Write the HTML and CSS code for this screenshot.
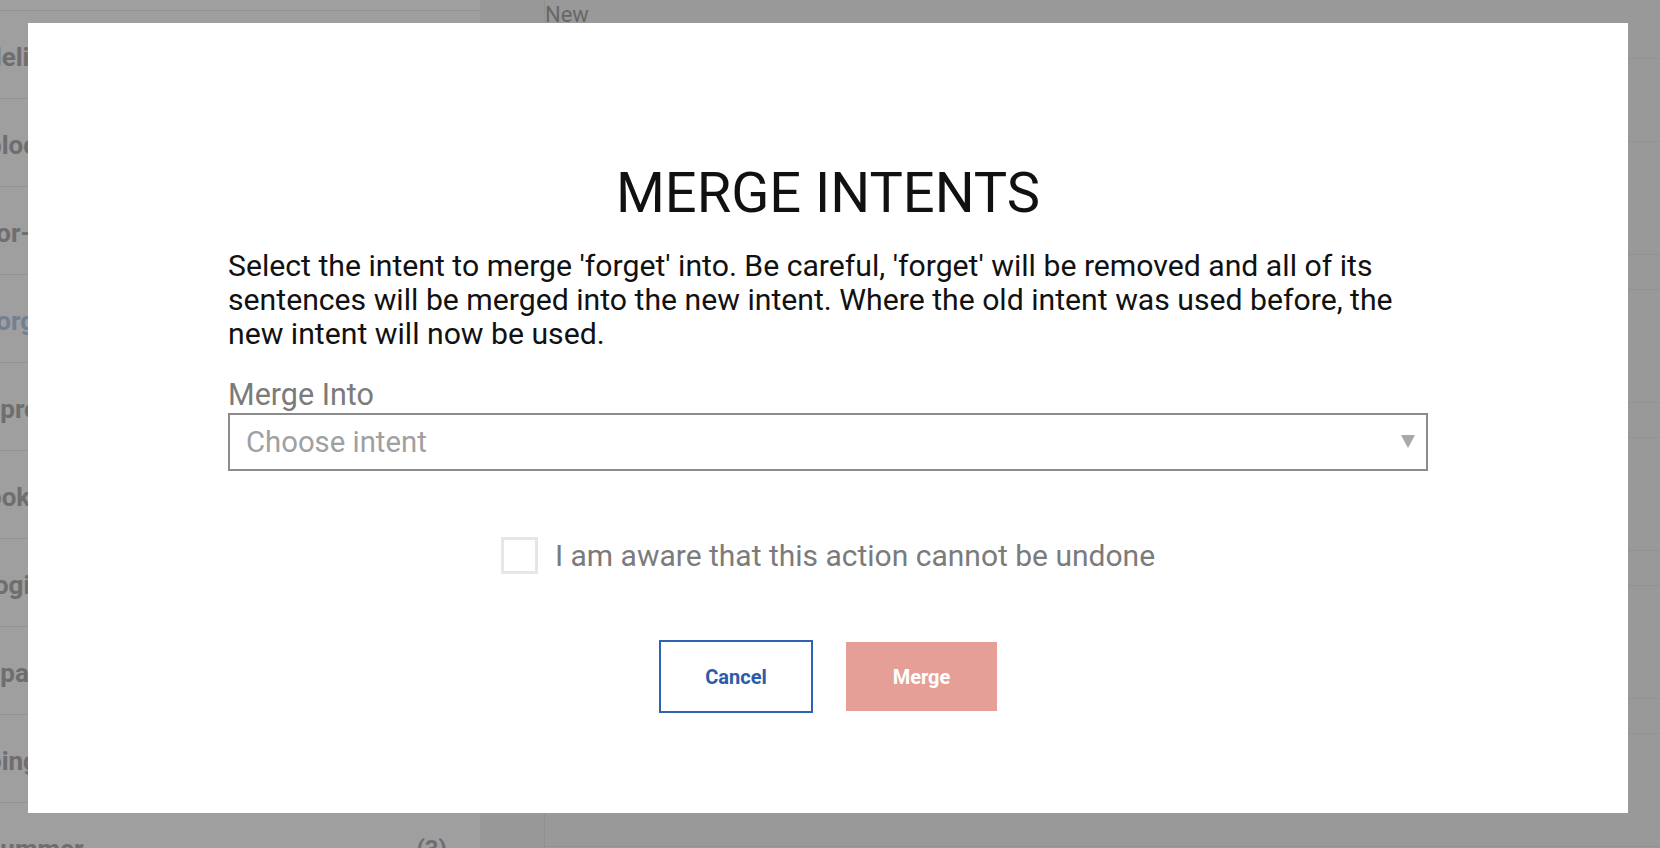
FILE: index.html
```html
<!DOCTYPE html>
<html lang="en">
<head>
    <meta charset="UTF-8" />
    <meta name="viewport" content="width=device-width, initial-scale=1.0"/>
    <title>Intents - Merge</title>
    <link rel="stylesheet" href="styles.css">
</head>
<body>
    <div class="app">
        <aside class="sidebar">
            <ul class="intent-list">
                <li class="intent-item"><span class="intent-name">greeting</span><span class="intent-count">(12)</span></li>
                <li class="intent-item"><span class="intent-name">delivery</span><span class="intent-count">(8)</span></li>
                <li class="intent-item"><span class="intent-name">block</span><span class="intent-count">(4)</span></li>
                <li class="intent-item"><span class="intent-name">for-sale</span><span class="intent-count">(6)</span></li>
                <li class="intent-item active"><span class="intent-name">forget</span><span class="intent-count">(5)</span></li>
                <li class="intent-item"><span class="intent-name">sprout</span><span class="intent-count">(2)</span></li>
                <li class="intent-item"><span class="intent-name">poke</span><span class="intent-count">(7)</span></li>
                <li class="intent-item"><span class="intent-name">login</span><span class="intent-count">(9)</span></li>
                <li class="intent-item"><span class="intent-name">spare-time</span><span class="intent-count">(3)</span></li>
                <li class="intent-item"><span class="intent-name">ping</span><span class="intent-count">(1)</span></li>
                <li class="intent-item"><span class="intent-name">summer</span><span class="intent-count">(3)</span></li>
            </ul>
        </aside>

        <main class="content">
            <div class="sentences">
                <div class="toolbar"><span class="tab">New</span></div>
                <div class="list-head"></div>
                <div class="sentence"></div>
                <div class="sentence-meta"></div>
                <div class="sentence"></div>
                <div class="sentence-meta"></div>
                <div class="sentence"></div>
                <div class="sentence-meta"></div>
                <div class="sentence"></div>
                <div class="sentence-meta"></div>
                <div class="sentence"></div>
            </div>
        </main>
    </div>

    <div class="overlay">
        <div class="modal">
            <h1 class="modal-title">MERGE INTENTS</h1>
            <div class="modal-body">
                <p class="modal-text">Select the intent to merge 'forget' into. Be careful, 'forget' will be removed and all of its sentences will be merged into the new intent. Where the old intent was used before, the new intent will now be used.</p>

                <label class="field-label" for="merge-into">Merge Into</label>
                <div class="select-wrap">
                    <select class="select" id="merge-into">
                        <option value="">Choose intent</option>
                        <option value="greeting">greeting</option>
                        <option value="delivery">delivery</option>
                        <option value="summer">summer</option>
                    </select>
                </div>

                <label class="confirm">
                    <input type="checkbox" class="confirm-box">
                    <span class="confirm-text">I am aware that this action cannot be undone</span>
                </label>

                <div class="modal-actions">
                    <button class="btn btn-cancel">Cancel</button>
                    <button class="btn btn-merge" disabled>Merge</button>
                </div>
            </div>
        </div>
    </div>
</body>
</html>
```

FILE: styles.css
```css
* {
    margin: 0;
    padding: 0;
    box-sizing: border-box;
}

body {
    font-family: Roboto, "Liberation Sans", sans-serif;
    color: #111;
    background: #f5f5f5;
    height: 100vh;
    overflow: hidden;
}

.app {
    display: flex;
    height: 100vh;
}

/* sidebar with intents (scrolled) */
.sidebar {
    width: 480px;
    flex-shrink: 0;
    background: #fff;
    overflow: hidden;
}

.intent-list {
    list-style: none;
    margin-top: -77px;
    margin-left: -13px;
}

.intent-item {
    height: 88px;
    display: flex;
    align-items: center;
    justify-content: space-between;
    padding: 4px 33px 0 0;
    border-bottom: 1px solid #ececec;
}

.intent-name {
    font-size: 26px;
    font-weight: bold;
    color: #b0b0b0;
}

.intent-item.active .intent-name {
    color: #b8cdee;
}

.intent-count {
    font-size: 24px;
    font-weight: bold;
    color: #b0b0b0;
}

/* main content */
.content {
    flex: 1;
    background: #f4f4f4;
    padding-left: 64px;
}

.sentences {
    height: 100%;
    background: #f6f6f6;
    border-left: 1px solid #e8e8e8;
}

.toolbar {
    height: 59px;
    border-bottom: 1px solid #ebebeb;
}

.tab {
    display: inline-block;
    font-size: 22px;
    line-height: 30px;
    color: #a6a6a6;
}

.list-head {
    height: 83px;
    border-bottom: 1px solid #ebebeb;
}

.sentence {
    height: 113px;
    border-bottom: 1px solid #ebebeb;
}

.sentence-meta {
    height: 35px;
    border-bottom: 1px solid #ebebeb;
}

/* modal */
.overlay {
    position: fixed;
    top: 0;
    left: 0;
    right: 0;
    bottom: 0;
    background: rgba(0, 0, 0, 0.375);
    display: flex;
    justify-content: center;
    align-items: flex-start;
    padding: 23px 4px 0 0;
}

.modal {
    width: 1600px;
    height: 790px;
    background: #fff;
    padding-top: 142px;
    display: flex;
    flex-direction: column;
    align-items: center;
}

.modal-title {
    font-size: 56px;
    line-height: 56px;
    font-weight: 400;
    color: #111;
}

.modal-body {
    width: 1200px;
    margin-top: 28px;
}

.modal-text {
    font-size: 30.2px;
    line-height: 34px;
    color: #111;
}

.field-label {
    display: block;
    margin-top: 26px;
    font-size: 30.5px;
    line-height: 36px;
    color: #7b7b7b;
}

.select-wrap {
    position: relative;
}

.select-wrap::after {
    content: "";
    position: absolute;
    right: 13px;
    top: 22px;
    border-left: 7px solid transparent;
    border-right: 7px solid transparent;
    border-top: 13px solid #a8a8a8;
    pointer-events: none;
}

.select {
    -webkit-appearance: none;
    appearance: none;
    width: 100%;
    height: 58px;
    border: 2px solid #8c8c8c;
    border-radius: 0;
    background: #fff;
    padding: 0 40px 0 16px;
    font-family: inherit;
    font-size: 29.3px;
    color: #a0a0a0;
    outline: none;
}

.confirm {
    display: flex;
    justify-content: center;
    align-items: center;
    gap: 17px;
    margin-top: 66px;
}

.confirm-box {
    -webkit-appearance: none;
    appearance: none;
    width: 37px;
    height: 37px;
    border: 3px solid #e6e6e6;
    background: #fff;
    margin: 0;
}

.confirm-text {
    font-size: 30px;
    color: #7b7b7b;
}

.modal-actions {
    display: flex;
    justify-content: center;
    align-items: center;
    gap: 33px;
    margin-top: 66px;
}

.btn {
    font-family: inherit;
    font-size: 20px;
    font-weight: bold;
    cursor: pointer;
}

.btn-cancel {
    width: 154px;
    height: 73px;
    background: #fff;
    color: #2a5cab;
    border: 2px solid #2e63b4;
}

.btn-merge {
    width: 151px;
    height: 69px;
    background: #e59f97;
    color: #fff;
    border: none;
}
```
